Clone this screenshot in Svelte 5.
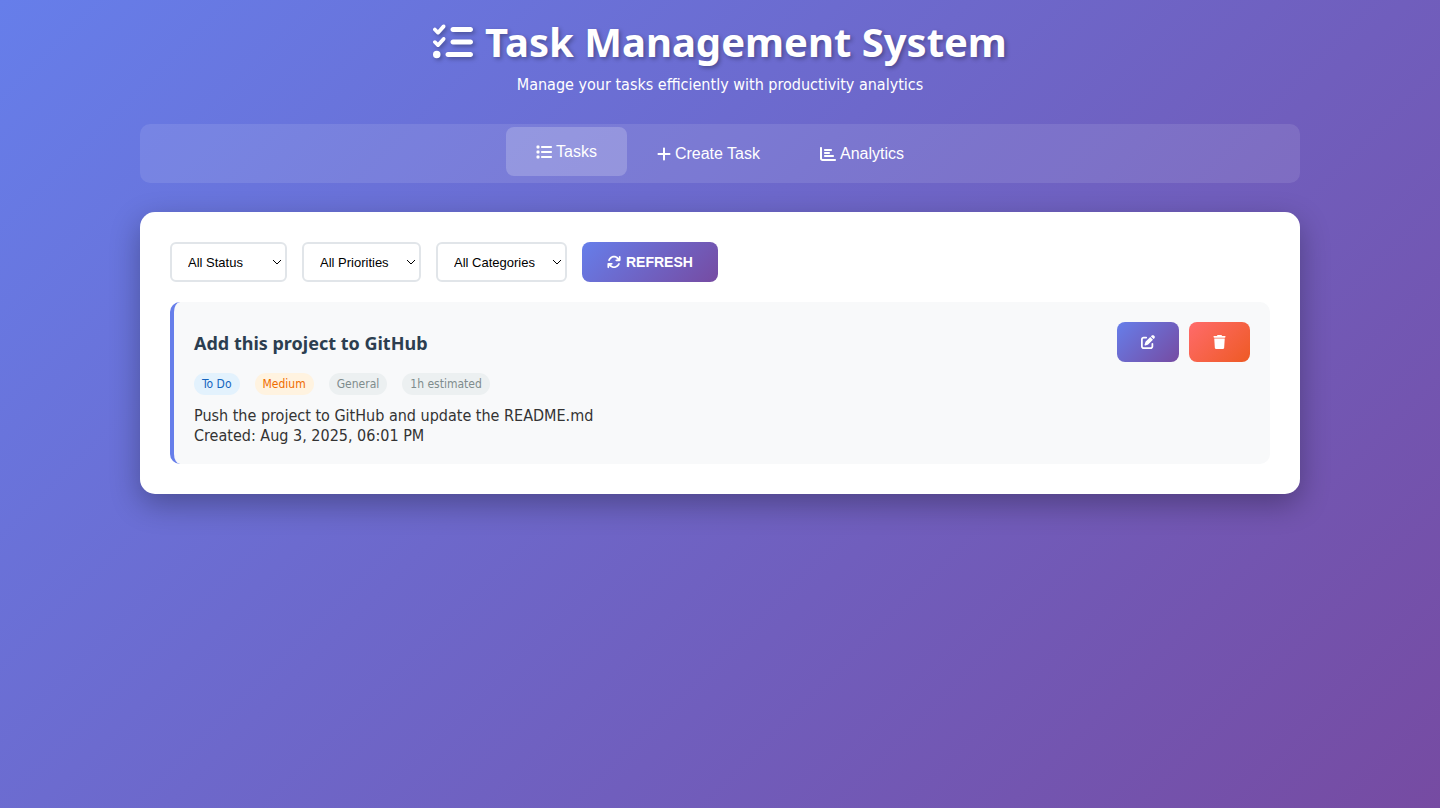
<script>
  const tabs = [
    {
      id: 'tasks',
      label: 'Tasks',
      width: 16,
      viewBox: '0 0 512 512',
      path: 'M40 48C26.7 48 16 58.7 16 72v48c0 13.3 10.7 24 24 24H88c13.3 0 24-10.7 24-24V72c0-13.3-10.7-24-24-24H40zM192 64c-17.7 0-32 14.3-32 32s14.3 32 32 32H480c17.7 0 32-14.3 32-32s-14.3-32-32-32H192zm0 160c-17.7 0-32 14.3-32 32s14.3 32 32 32H480c17.7 0 32-14.3 32-32s-14.3-32-32-32H192zm0 160c-17.7 0-32 14.3-32 32s14.3 32 32 32H480c17.7 0 32-14.3 32-32s-14.3-32-32-32H192zM16 232v48c0 13.3 10.7 24 24 24H88c13.3 0 24-10.7 24-24V232c0-13.3-10.7-24-24-24H40c-13.3 0-24 10.7-24 24zM40 368c-13.3 0-24 10.7-24 24v48c0 13.3 10.7 24 24 24H88c13.3 0 24-10.7 24-24V392c0-13.3-10.7-24-24-24H40z'
    },
    {
      id: 'create',
      label: 'Create Task',
      width: 14,
      viewBox: '0 0 448 512',
      path: 'M256 80c0-17.7-14.3-32-32-32s-32 14.3-32 32V224H48c-17.7 0-32 14.3-32 32s14.3 32 32 32H192V432c0 17.7 14.3 32 32 32s32-14.3 32-32V288H400c17.7 0 32-14.3 32-32s-14.3-32-32-32H256V80z'
    },
    {
      id: 'analytics',
      label: 'Analytics',
      width: 16,
      viewBox: '0 0 512 512',
      path: 'M32 32c17.7 0 32 14.3 32 32V400c0 8.8 7.2 16 16 16H480c17.7 0 32 14.3 32 32s-14.3 32-32 32H80c-44.2 0-80-35.8-80-80V64C0 46.3 14.3 32 32 32zm96 96c0-17.7 14.3-32 32-32l192 0c17.7 0 32 14.3 32 32s-14.3 32-32 32H160c-17.7 0-32-14.3-32-32zm32 64H288c17.7 0 32 14.3 32 32s-14.3 32-32 32H160c-17.7 0-32-14.3-32-32s14.3-32 32-32zm0 96H416c17.7 0 32 14.3 32 32s-14.3 32-32 32H160c-17.7 0-32-14.3-32-32s14.3-32 32-32z'
    }
  ];

  const filters = [
    { label: 'Status', options: ['All Status', 'To Do', 'In Progress', 'Done'] },
    { label: 'Priority', options: ['All Priorities', 'Low', 'Medium', 'High'] },
    { label: 'Category', options: ['All Categories', 'General'] }
  ];

  const tasks = [
    {
      title: 'Add this project to GitHub',
      badges: [
        { text: 'To Do', kind: 'todo' },
        { text: 'Medium', kind: 'medium' },
        { text: 'General', kind: 'neutral' },
        { text: '1h estimated', kind: 'neutral' }
      ],
      description: 'Push the project to GitHub and update the README.md',
      created: 'Aug 3, 2025, 06:01 PM'
    }
  ];

  let active = $state('tasks');
</script>

<div class="container">
  <header>
    <h1>
      <svg width="40" height="40" viewBox="0 0 512 512" aria-hidden="true"><path d="M152.1 38.2c9.9 8.9 10.7 24 1.8 33.9l-72 80c-4.4 4.9-10.6 7.8-17.2 7.9s-12.9-2.4-17.6-7L7 113C-2.3 103.6-2.3 88.4 7 79s24.6-9.4 33.9 0l22.1 22.1 55.1-61.2c8.9-9.9 24-10.7 33.9-1.8zm0 160c9.9 8.9 10.7 24 1.8 33.9l-72 80c-4.4 4.9-10.6 7.8-17.2 7.9s-12.9-2.4-17.6-7L7 273c-9.4-9.4-9.4-24.6 0-33.9s24.6-9.4 33.9 0l22.1 22.1 55.1-61.2c8.9-9.9 24-10.7 33.9-1.8zM224 96c0-17.7 14.3-32 32-32H480c17.7 0 32 14.3 32 32s-14.3 32-32 32H256c-17.7 0-32-14.3-32-32zm0 160c0-17.7 14.3-32 32-32H480c17.7 0 32 14.3 32 32s-14.3 32-32 32H256c-17.7 0-32-14.3-32-32zM160 416c0-17.7 14.3-32 32-32H480c17.7 0 32 14.3 32 32s-14.3 32-32 32H192c-17.7 0-32-14.3-32-32zM48 368a48 48 0 1 1 0 96 48 48 0 1 1 0-96z" /></svg>
      Task Management System
    </h1>
    <p>Manage your tasks efficiently with productivity analytics</p>
  </header>

  <nav>
    {#each tabs as tab}
      <button class="tab" class:active={active === tab.id} onclick={() => (active = tab.id)}>
        <svg width={tab.width} height="16" viewBox={tab.viewBox} aria-hidden="true"><path d={tab.path} /></svg>
        {tab.label}
      </button>
    {/each}
  </nav>

  <main>
    <div class="filters">
      {#each filters as filter}
        <select aria-label={filter.label}>
          {#each filter.options as option}
            <option>{option}</option>
          {/each}
        </select>
      {/each}
      <button class="btn refresh">
        <svg width="14" height="14" viewBox="0 0 512 512" aria-hidden="true"><path d="M105.1 202.6c7.7-21.8 20.2-42.3 37.8-59.8c62.5-62.5 163.8-62.5 226.3 0L386.3 160H336c-17.7 0-32 14.3-32 32s14.3 32 32 32H463.5c0 0 0 0 0 0h.4c17.7 0 32-14.3 32-32V64c0-17.7-14.3-32-32-32s-32 14.3-32 32v51.2L414.4 97.6c-87.5-87.5-229.3-87.5-316.8 0C73.2 122 55.6 150.7 44.8 181.4c-5.9 16.7 2.9 34.9 19.5 40.8s34.9-2.9 40.8-19.5zM39 289.3c-5 1.5-9.8 4.2-13.7 8.2c-4 4-6.7 8.8-8.1 14c-.3 1.2-.6 2.5-.8 3.8c-.3 1.7-.4 3.4-.4 5.1V448c0 17.7 14.3 32 32 32s32-14.3 32-32V396.9l17.6 17.5 0 0c87.5 87.4 229.3 87.4 316.7 0c24.4-24.4 42.1-53.1 52.9-83.7c5.9-16.7-2.9-34.9-19.5-40.8s-34.9 2.9-40.8 19.5c-7.7 21.8-20.2 42.3-37.8 59.8c-62.5 62.5-163.8 62.5-226.3 0l-.1-.1L125.6 352H176c17.7 0 32-14.3 32-32s-14.3-32-32-32H48.4c-1.6 0-3.2 .1-4.8 .3s-3.1 .5-4.6 1z" /></svg>
        REFRESH
      </button>
    </div>

    {#each tasks as task}
      <article>
        <div class="info">
          <h2>{task.title}</h2>
          <div class="badges">
            {#each task.badges as badge}
              <span class="badge {badge.kind}">{badge.text}</span>
            {/each}
          </div>
          <p>{task.description}</p>
          <p>Created: {task.created}</p>
        </div>
        <div class="actions">
          <button class="btn" aria-label="Edit task">
            <svg width="14" height="14" viewBox="0 0 512 512" aria-hidden="true"><path d="M471.6 21.7c-21.9-21.9-57.3-21.9-79.2 0L362.3 51.7l97.9 97.9 30.1-30.1c21.9-21.9 21.9-57.3 0-79.2L471.6 21.7zm-299.2 220c-6.1 6.1-10.8 13.6-13.5 21.9l-29.6 88.8c-2.9 8.6-.6 18.1 5.8 24.6s15.9 8.7 24.6 5.8l88.8-29.6c8.2-2.7 15.7-7.4 21.9-13.5L437.7 172.3 339.7 74.3 172.4 241.7zM96 64C43 64 0 107 0 160V416c0 53 43 96 96 96H352c53 0 96-43 96-96V320c0-17.7-14.3-32-32-32s-32 14.3-32 32v96c0 17.7-14.3 32-32 32H96c-17.7 0-32-14.3-32-32V160c0-17.7 14.3-32 32-32h96c17.7 0 32-14.3 32-32s-14.3-32-32-32H96z" /></svg>
          </button>
          <button class="btn danger" aria-label="Delete task">
            <svg width="13" height="14" viewBox="0 0 448 512" aria-hidden="true"><path d="M135.2 17.7L128 32H32C14.3 32 0 46.3 0 64S14.3 96 32 96H416c17.7 0 32-14.3 32-32s-14.3-32-32-32H320l-7.2-14.3C307.4 6.8 296.3 0 284.2 0H163.8c-12.1 0-23.2 6.8-28.6 17.7zM416 128H32L53.2 467c1.6 25.3 22.6 45 47.9 45H346.9c25.3 0 46.3-19.7 47.9-45L416 128z" /></svg>
          </button>
        </div>
      </article>
    {/each}
  </main>
</div>

<style>
  :global(*) {
    box-sizing: border-box;
  }
  :global(body) {
    margin: 0;
    min-height: 100vh;
    background: linear-gradient(135deg, #667eea 0%, #764ba2 100%);
    color: #333;
    font-family: 'DejaVu Sans Condensed', 'Noto Sans', sans-serif;
    font-size: 16px;
    line-height: 20px;
  }
  svg {
    flex: none;
    fill: currentColor;
    overflow: visible;
  }
  h1,
  h2,
  p {
    margin: 0;
  }
  h1,
  h2 {
    font-family: 'Noto Sans', 'Open Sans', sans-serif;
  }
  .container {
    max-width: 1200px;
    margin: 0 auto;
    padding: 18px 20px;
  }
  header {
    margin-bottom: 29px;
    color: #fff;
    text-align: center;
  }
  h1 {
    display: flex;
    justify-content: center;
    align-items: center;
    gap: 12px;
    margin-bottom: 9px;
    font-size: 40px;
    line-height: 48px;
    text-shadow: 2px 2px 4px rgba(0, 0, 0, 0.3);
  }
  h1 svg {
    filter: drop-shadow(2px 2px 2px rgba(0, 0, 0, 0.3));
  }
  nav {
    display: flex;
    justify-content: center;
    margin-bottom: 29px;
    padding: 5px;
    border-radius: 10px;
    background: rgba(255, 255, 255, 0.1);
  }
  .tab {
    display: flex;
    align-items: center;
    gap: 4px;
    padding: 15px 30px;
    border: 0;
    border-radius: 8px;
    background: transparent;
    color: #fff;
    font-family: 'Liberation Sans', Arial, sans-serif;
    font-size: 16px;
    line-height: 19px;
    cursor: pointer;
  }
  .tab.active {
    background: rgba(255, 255, 255, 0.2);
    transform: translateY(-2px);
  }
  main {
    padding: 30px;
    border-radius: 15px;
    background: #fff;
    box-shadow: 0 10px 30px rgba(0, 0, 0, 0.3);
  }
  .filters {
    display: flex;
    flex-wrap: wrap;
    gap: 15px;
    margin-bottom: 20px;
  }
  select {
    height: 40px;
    padding: 0 30px 0 16px;
    border: 2px solid #e1e5e9;
    border-radius: 6px;
    appearance: none;
    background: #fff url("data:image/svg+xml,%3Csvg xmlns='http://www.w3.org/2000/svg' width='10' height='6' viewBox='0 0 10 6'%3E%3Cpath d='M1 1l4 4 4-4' fill='none' stroke='%23000' stroke-width='1'/%3E%3C/svg%3E") no-repeat right 3px center;
    color: #000;
    font-family: 'Liberation Sans', Arial, sans-serif;
    font-size: 13px;
  }
  .btn {
    display: flex;
    align-items: center;
    justify-content: center;
    gap: 5px;
    height: 40px;
    padding: 0 24px;
    border: 0;
    border-radius: 8px;
    background: linear-gradient(135deg, #667eea 0%, #764ba2 100%);
    color: #fff;
    font-family: 'Liberation Sans', Arial, sans-serif;
    font-size: 14px;
    font-weight: 700;
    cursor: pointer;
  }
  .btn.refresh {
    padding: 0 25px;
  }
  .btn.danger {
    background: linear-gradient(135deg, #ff6b6b 0%, #ee5a24 100%);
  }
  article {
    display: flex;
    justify-content: space-between;
    align-items: flex-start;
    padding: 20px 20px 18px;
    border-left: 4px solid #667eea;
    border-radius: 10px;
    background: #f8f9fa;
  }
  h2 {
    margin: 10px 0 18px;
    color: #2c3e50;
    font-size: 18px;
    line-height: 23px;
  }
  .badges {
    display: flex;
    flex-wrap: wrap;
    gap: 15px;
    margin-bottom: 11px;
  }
  .badge {
    padding: 4px 8px;
    border-radius: 12px;
    font-size: 12px;
    line-height: 14px;
  }
  .todo {
    background: #e3f2fd;
    color: #1565c0;
  }
  .medium {
    background: #fff3e0;
    color: #ef6c00;
  }
  .neutral {
    background: #ecf0f1;
    color: #7f8c8d;
  }
  .actions {
    display: flex;
    gap: 10px;
  }
</style>
